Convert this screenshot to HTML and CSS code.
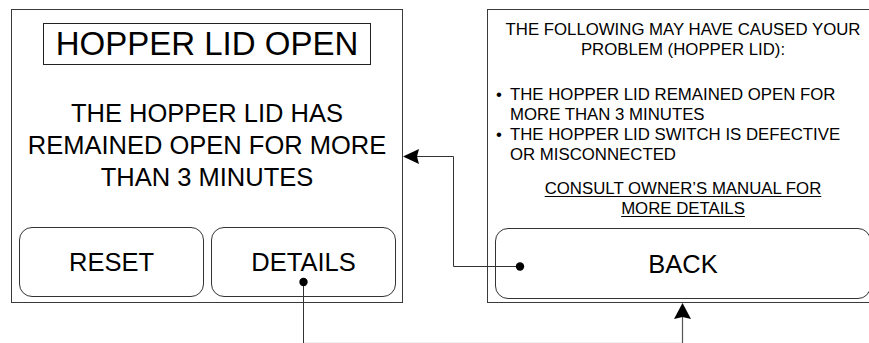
FILE: index.html
```html
<!DOCTYPE html>
<html>
<head>
<meta charset="utf-8">
<link rel="stylesheet" href="styles.css">
</head>
<body>
<div class="stage">
  <section class="panel panel-main">
    <div class="title">HOPPER LID OPEN</div>
    <p class="message">THE HOPPER LID HAS<br>REMAINED OPEN FOR MORE<br>THAN 3 MINUTES</p>
    <div class="buttons">
      <div class="btn">RESET</div>
      <div class="btn">DETAILS</div>
    </div>
  </section>
  <section class="panel panel-details">
    <p class="heading">THE FOLLOWING MAY HAVE CAUSED YOUR<br>PROBLEM (HOPPER LID):</p>
    <ul class="causes">
      <li><span class="dot">•</span><span>THE HOPPER LID REMAINED OPEN FOR<br>MORE THAN 3 MINUTES</span></li>
      <li><span class="dot">•</span><span>THE HOPPER LID SWITCH IS DEFECTIVE<br>OR MISCONNECTED</span></li>
    </ul>
    <p class="consult">CONSULT OWNER’S MANUAL FOR<br>MORE DETAILS</p>
    <div class="btn btn-back">BACK</div>
  </section>
</div>
<svg class="wires" width="869" height="343" viewBox="0 0 869 343">
  <line x1="303" y1="342.5" x2="682" y2="342.5" stroke="#f0f0f0" stroke-width="1"/>
  <line x1="303.5" y1="282" x2="303.5" y2="343" stroke="#333" stroke-width="1"/>
  <circle cx="303.5" cy="282" r="4.2" fill="#000"/>
  <line x1="682.5" y1="316" x2="682.5" y2="343" stroke="#555" stroke-width="1.2"/>
  <polygon points="682.5,303 691,319 682.5,317 674,319" fill="#000"/>
  <polyline points="520,266.5 453.5,266.5 453.5,156.5 416,156.5" fill="none" stroke="#333" stroke-width="1"/>
  <circle cx="520" cy="266.5" r="4.2" fill="#000"/>
  <polygon points="403,156.5 419,149 417,156.5 419,164" fill="#000"/>
</svg>
</body>
</html>
```
FILE: styles.css
```css
html, body {
  margin: 0;
  padding: 0;
  background: #fff;
}
body {
  position: relative;
  width: 869px;
  height: 343px;
  overflow: hidden;
  font-family: "Liberation Sans", Arial, sans-serif;
  color: #000;
}
.stage {
  display: flex;
  align-items: flex-start;
  gap: 84px;
  padding: 9px 0 0 11px;
}
.panel {
  box-sizing: border-box;
  width: 392px;
  height: 294px;
  border: 1px solid #3a3a3a;
  display: flex;
  flex-direction: column;
  flex-shrink: 0;
}
.panel-main {
  align-items: center;
}
.title {
  margin-top: 13px;
  border: 1px solid #222;
  font-size: 33px;
  line-height: 40px;
  padding: 0 12px;
  white-space: nowrap;
}
.message {
  margin: 32px 0 0;
  font-size: 25.5px;
  line-height: 32px;
  text-align: center;
  white-space: nowrap;
}
.buttons {
  align-self: stretch;
  display: flex;
  gap: 7px;
  margin-top: auto;
  padding: 0 6px 5px 7px;
}
.btn {
  box-sizing: border-box;
  flex: 1;
  height: 70px;
  border: 1px solid #333;
  border-radius: 13px;
  display: flex;
  align-items: center;
  justify-content: center;
  font-size: 25.5px;
}
.panel-details {
  font-size: 16.8px;
  line-height: 20px;
}
.heading {
  margin: 10px 0 0;
  text-align: center;
  white-space: nowrap;
}
.causes {
  list-style: none;
  margin: 25px 0 0;
  padding: 0 0 0 8px;
}
.causes li {
  display: flex;
  white-space: nowrap;
}
.dot {
  width: 14px;
  flex-shrink: 0;
}
.consult {
  margin: 14px 0 0;
  text-align: center;
  text-decoration: underline;
  text-underline-offset: 2px;
  white-space: nowrap;
}
.btn-back {
  flex: none;
  height: 71px;
  margin: 9px 7px 0;
}
.wires {
  position: absolute;
  left: 0;
  top: 0;
  pointer-events: none;
}
```
